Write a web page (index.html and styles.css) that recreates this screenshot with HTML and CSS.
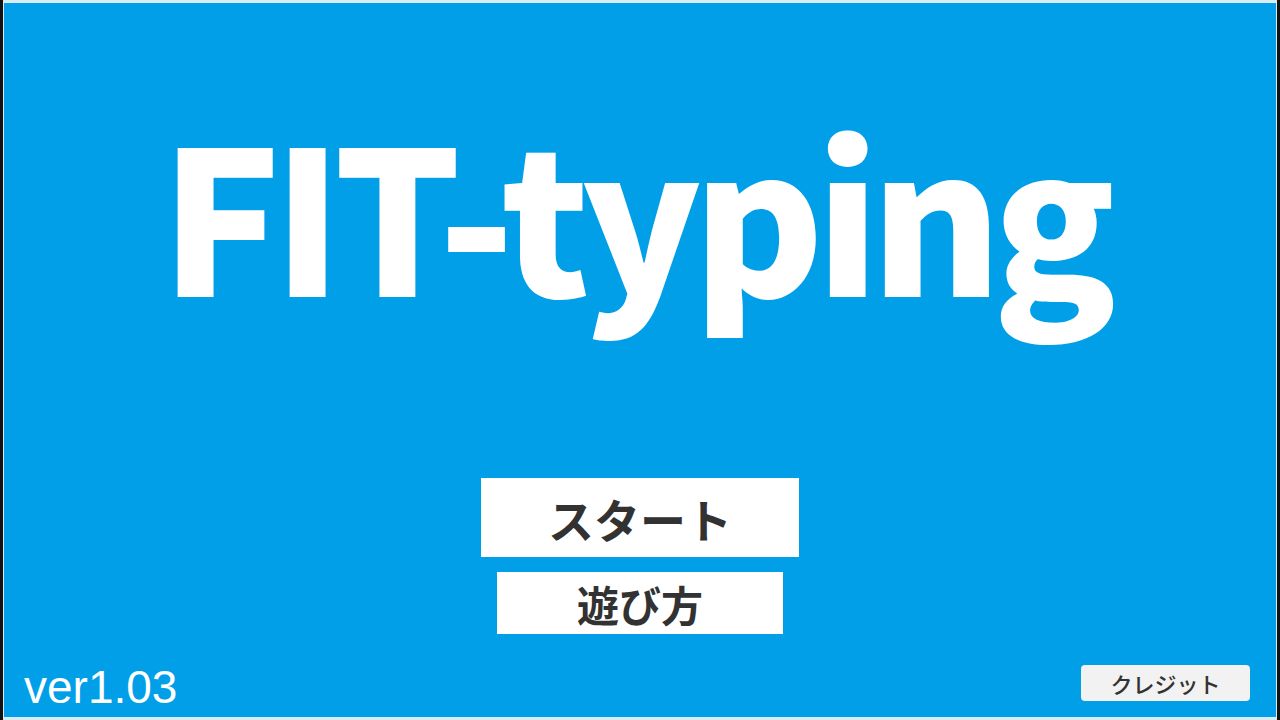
FILE: index.html
```html
<!DOCTYPE html>
<html lang="ja">
<head>
<meta charset="utf-8">
<title>FIT-typing</title>
<link rel="stylesheet" href="styles.css">
</head>
<body>
<div class="frame">
  <main class="screen">
    <h1 class="title">FIT-typing</h1>
    <div class="menu">
      <button class="btn btn-start">スタート</button>
      <button class="btn btn-howto">遊び方</button>
    </div>
    <footer class="footer">
      <span class="version">ver1.03</span>
      <button class="btn-credit">クレジット</button>
    </footer>
  </main>
</div>
</body>
</html>
```
FILE: styles.css
```css
html, body {
  margin: 0;
  padding: 0;
  width: 1280px;
  height: 720px;
  overflow: hidden;
  background: #101010;
}
.frame {
  width: 1280px;
  height: 720px;
  box-sizing: border-box;
  border-left: 3px solid #121212;
  border-right: 3px solid #121212;
  display: flex;
}
.screen {
  flex: 1;
  box-sizing: border-box;
  background: #009fe8;
  border-top: 3px solid #dcecf5;
  border-bottom: 3px solid #dcecf5;
  border-left: 1px solid #dcecf5;
  border-right: 1px solid #dcecf5;
  display: flex;
  flex-direction: column;
  align-items: center;
  font-family: "Noto Sans CJK JP", "Noto Sans", sans-serif;
}
.title {
  margin: 107px 0 0 0;
  padding-right: 12px;
  font-family: "Noto Sans CJK JP", sans-serif;
  font-weight: 900;
  font-size: 200px;
  line-height: 200px;
  color: #ffffff;
  letter-spacing: -9px;
}
.menu {
  margin-top: 168px;
  display: flex;
  flex-direction: column;
  align-items: center;
  gap: 15px;
}
.btn {
  border: none;
  background: #ffffff;
  color: #323232;
  font-family: "Noto Sans CJK JP", sans-serif;
  padding: 0;
  display: flex;
  align-items: center;
  justify-content: center;
}
.btn-start {
  width: 318px;
  height: 79px;
  font-size: 46px;
  font-weight: 700;
}
.btn-howto {
  width: 286px;
  height: 62px;
  font-size: 42px;
  font-weight: 700;
}
.footer {
  margin-top: auto;
  align-self: stretch;
  display: flex;
  justify-content: space-between;
  align-items: flex-end;
  padding: 0 26px 7px 20px;
}
.version {
  font-family: "Liberation Sans", Arial, sans-serif;
  font-size: 46px;
  line-height: 46px;
  color: #ffffff;
}
.btn-credit {
  width: 169px;
  height: 36px;
  margin-bottom: 9px;
  border: none;
  border-radius: 4px;
  background: #f2f2f2;
  color: #323232;
  font-family: "Noto Sans CJK JP", sans-serif;
  font-size: 22px;
  font-weight: 500;
  padding: 0;
}
```
